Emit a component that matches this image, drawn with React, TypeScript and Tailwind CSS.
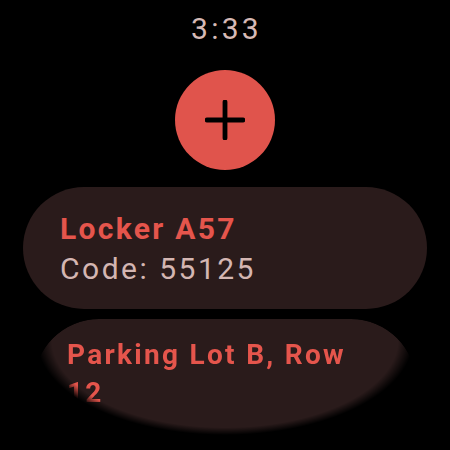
import React from "react";

export default function App() {
  return (
    <div
      className="w-[450px] h-[450px] bg-black overflow-hidden flex flex-col items-center"
      style={{ fontFamily: "Roboto, 'Noto Sans', sans-serif" }}
    >
      <div className="mt-[14px] h-[30px] text-[30px] leading-[30px] tracking-[3.3px] pl-[3px] text-[#d6b9b5]">
        3:33
      </div>
      <div className="mt-[26px] w-[100px] h-[100px] rounded-full bg-[#e0544c] flex items-center justify-center">
        <svg width="40" height="40" viewBox="0 0 40 40">
          <path d="M20 2 V38 M2 20 H38" stroke="#000" strokeWidth="4.8" strokeLinecap="round" fill="none" />
        </svg>
      </div>
      <div className="mt-[17px] w-[404px] h-[122px] rounded-full bg-[#2a1b1b] pl-[37px] pt-[22px] shrink-0">
        <div className="text-[30px] leading-[40px] font-bold text-[#e5554c] tracking-[2.3px]">Locker A57</div>
        <div className="text-[30px] leading-[40px] text-[#d4b6b2] tracking-[2.5px]">Code: 55125</div>
      </div>
      <div className="mt-[10px] w-[382px] h-[130px] rounded-full bg-[#2a1b1b] pl-[33px] pt-[17px] shrink-0 [mask-image:radial-gradient(ellipse_186px_94px_at_191px_21px,black_93%,transparent_101%)] [-webkit-mask-image:radial-gradient(ellipse_186px_94px_at_191px_21px,black_93%,transparent_101%)]">
        <div className="text-[28px] leading-[38px] font-bold text-[#e5554c] tracking-[2.3px]">
          Parking Lot B, Row
          <br />
          12
        </div>
      </div>
    </div>
  );
}
